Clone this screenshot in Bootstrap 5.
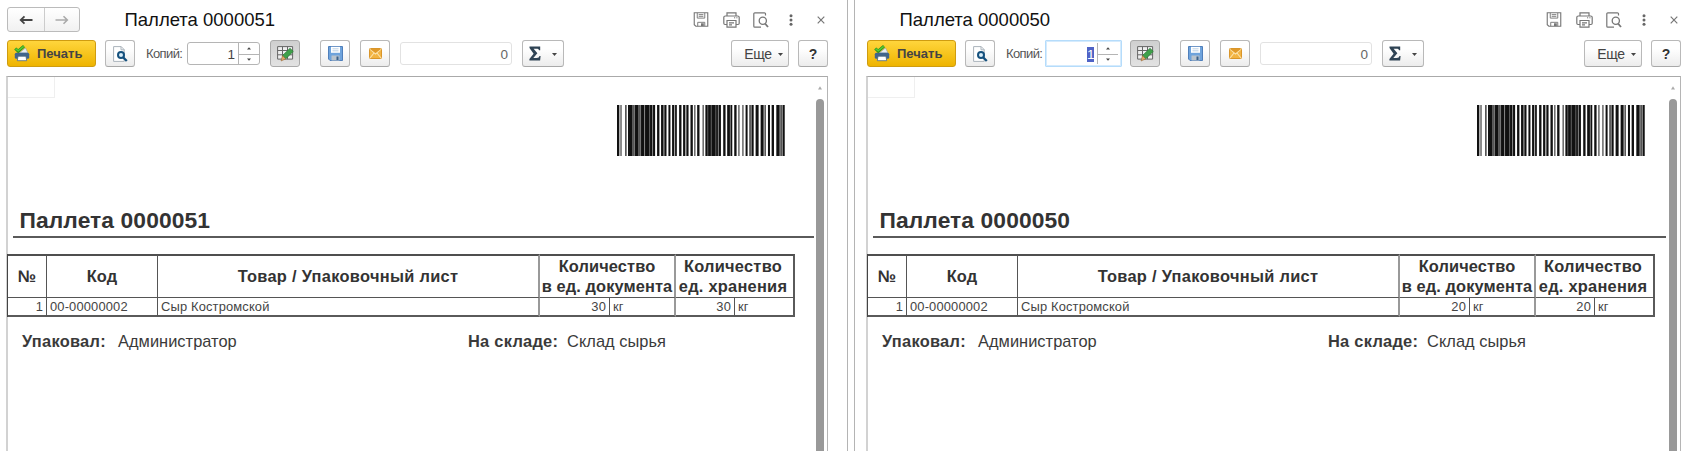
<!DOCTYPE html>
<html lang="ru">
<head>
<meta charset="utf-8">
<title>Паллеты</title>
<link href="https://cdn.jsdelivr.net/npm/bootstrap@5.3.0/dist/css/bootstrap.min.css" rel="stylesheet">
<style>
body{font-family:"Liberation Sans",Arial,sans-serif;background:#fff;color:#333;height:451px;overflow:hidden}
.pane-l{width:848px;padding:7px 19px 0 7px;border-right:1px solid #b4b4b4}
.pane-gap{width:6px}
.pane-r{width:837px;padding:7px 10px 0 12px;border-left:1px solid #b4b4b4}
.headrow{height:25px}
.navpair{width:73px;height:25px;border:1px solid #bbb;border-radius:3px;background:linear-gradient(#fff,#f1f1f1)}
.navpair>span+span{border-left:1px solid #ccc}
.wintitle{font-size:18.5px;line-height:24px;color:#111;margin-left:44.5px}
.pane-r .wintitle{margin-left:32.5px}
.headicons{padding-right:3px}
.headicons svg{display:block}
.m9{margin-left:9px}.m10{margin-left:10px}.m13{margin-left:13px}.m14{margin-left:14px}.m20{margin-left:20px}.m24{margin-left:24px}
.toolrow{height:27px;margin-top:8px}
.tb{height:27px;width:30px;padding:0;border:1px solid #b9b9b9;border-bottom-color:#a8a8a8;border-radius:3px;background:linear-gradient(#fff 30%,#ececec);font-size:14px;line-height:1;color:#444;display:flex;align-items:center;justify-content:center;flex:none}
.tb-print{width:89px;background:linear-gradient(#ffd53c,#eeb400);border-color:#cf9c10;color:#444;font-weight:700;font-size:13px;justify-content:flex-start;padding-left:6px}
.tb-print svg{margin-right:7px}
.tb-sum{width:42px}
.tb-more{width:58px;letter-spacing:-.4px}
.tb-more span{margin-left:7px}
.tb-help{font-size:14px;font-weight:700;color:#333}
.tb-on{background:linear-gradient(#cfcfcf,#e2e2e2);border-color:#aaa}
.lbl{font-size:13px;color:#555;width:41px;line-height:27px;margin-left:11px;letter-spacing:-.6px;white-space:nowrap}
.fld{height:23px;border:1px solid #b5b5b5;border-radius:3px;font-size:13.5px;line-height:23px;color:#444;flex:none}
.fld-copies{width:73px}
.fld-copies .cnt{padding-right:3px}
.fld-focus{width:77px;height:27px;margin:0 -2px;border:1px solid #b5dcfb;box-shadow:inset 0 0 0 1px #d5ebfd;border-radius:1px;padding:2px 3px 2px 1px}
.spin{width:21px;border-left:1px solid #b5b5b5}
.spin>i{height:50%;display:flex;align-items:center;justify-content:center}
.spin>i+i{border-top:1px solid #b5b5b5}
.fld-num{width:112px;border-color:#e2e2e2;padding-right:3px;color:#666}
.selx{background:#4f63c6;color:#fff;height:15px;line-height:15px;width:7px;margin:4px 3px 0 auto;text-align:center;display:block}
.sheet{margin-top:9px;height:375px;border-top:1px solid #aaa;border-left:2px solid #d2d2d2;border-right:1px solid #b5b5b5;margin-left:-1px;position:relative}
.selcell{width:47px;height:21px;border:1px solid #efefef;border-width:0 1px 1px 0}
.scrollcol{position:absolute;right:3px;top:0;width:8px;height:374px}
.scrollcol svg{display:block;margin:9px auto 0}
.thumb{height:352px;background:#999;border-radius:4px 4px 0 0;margin-top:9px}
.barcode{display:block;margin:7px 0 0 609px}
.doctitle{font-size:22.8px;font-weight:700;line-height:26px;margin:51px 0 0 11.5px;color:#333;letter-spacing:.1px}
.docrule{height:2px;background:#5a5a5a;margin:3px 13px 0 5px}
.pane-r .docrule{margin-right:14px}
.doc{display:grid;grid-template-columns:39px 111px 382px 70px 66px 59px 60px;grid-template-rows:44px 19px;width:788px;margin:16px 0 0 -1px;position:relative;border-left:1px solid #444}
.doc>div{border-right:1px solid #555;border-bottom:1px solid #555;display:flex;align-items:center;white-space:nowrap;font-size:12.9px;letter-spacing:.16px;color:#444;padding:1px 4px 0 3px}
.doc>.hd{font-weight:700;font-size:16.4px;line-height:20px;letter-spacing:.1px;border-top:2px solid #4f4f4f;justify-content:center;text-align:center;color:#333;padding:0 0 2px}
.doc>.wide{letter-spacing:.3px}
.doc>.last{border-bottom:2px solid #5a5a5a}
.doc>.g{border-right:2px solid #999}
.doc>.e{border-right:2px solid #5a5a5a}
.doc>.n{justify-content:flex-end;padding-right:3px}
.doc>.two{grid-column:span 2}
.store{margin-right:3px;letter-spacing:.25px}
.foot{font-size:16.4px;line-height:20px;margin-top:14px;color:#3a3a3a;letter-spacing:.04px;white-space:nowrap}
.foot b{letter-spacing:.27px}
.f1{margin-left:14px;width:96px}.f2{width:350px}.f3{width:99px}
.g8{margin-left:6px}.g11{margin-left:11px}
.g8,.g11{margin-top:1px}
</style>
</head>
<body>
<svg width="0" height="0" class="position-absolute"><defs>
<symbol id="disk" viewBox="0 0 16 16"><path d="M1 .8h14.200v14.400H2.500L.8 13.500V.8z" fill="none" stroke="#777" stroke-width="1.200"/><path d="M4 1v5.500h8V1M5.500 2.800h5M5.500 4.600h5M4.500 15v-4h7.500v4" fill="none" stroke="#777"/><path d="M8 12h3v3H8z" fill="#777"/></symbol>
<symbol id="prn" viewBox="0 0 17 16"><path d="M4 4V.8h9V4M3.500 12.500H2a1.200 1.200 0 0 1-1.200-1.200V5.500A1.500 1.500 0 0 1 2.300 4h12.400a1.500 1.500 0 0 1 1.500 1.500v5.800a1.200 1.200 0 0 1-1.200 1.200h-1.500M4 8.500h9v6.700H4zM6 10.800h5M6 12.800h3" fill="none" stroke="#777" stroke-width="1.200"/><path d="M11 5.800h1.200M13.300 5.800h1.200" stroke="#777"/></symbol>
<symbol id="prev" viewBox="0 0 16 16"><path d="M12.500 3.500V1.800a1 1 0 0 0-1-1H1.800a1 1 0 0 0-1 1v12.400a1 1 0 0 0 1 1H8" fill="none" stroke="#777" stroke-width="1.200"/><circle cx="9.800" cy="8.800" r="3.600" fill="none" stroke="#777" stroke-width="1.300"/><path d="M12 11.500l3 3.500" stroke="#777" stroke-width="1.800"/></symbol>
<symbol id="dots" viewBox="0 0 4 12"><circle cx="2" cy="1.700" r="1.500" fill="#666"/><circle cx="2" cy="6" r="1.500" fill="#666"/><circle cx="2" cy="10.300" r="1.500" fill="#666"/></symbol>
<symbol id="cross" viewBox="0 0 8 8"><path d="M.7.7l6.600 6.600M7.300.7L.7 7.300" stroke="#777" stroke-width="1.200"/></symbol>
<symbol id="printc" viewBox="0 0 16 17"><path d="M5 8l6.500-5L14 8z" fill="#e9eef2" stroke="#8c9aa5" stroke-width=".6"/><rect x=".8" y="7.800" width="14.400" height="6" rx="1.500" fill="#41658c"/><path d="M4 11.200h8l.7 4.500H3.300z" fill="#fff" stroke="#49657f" stroke-width=".8"/><path d="M1.200 3.500l3 2.700L10 1.200" fill="none" stroke="#2c8d1c" stroke-width="3"/><path d="M1.500 3.600l2.700 2.200L9.700 1.400" fill="none" stroke="#55cc33" stroke-width="1.500"/></symbol>
<symbol id="prevc" viewBox="0 0 15 16"><path d="M.6.6h7.600l3 3v11.800H.6z" fill="#fff" stroke="#aab3bb"/><path d="M8 .6v3.200h3.200" fill="none" stroke="#aab3bb"/><circle cx="8" cy="9" r="3" fill="#d9eefa" stroke="#15517e" stroke-width="2"/><path d="M10.300 11.500l3.500 3.500" stroke="#15517e" stroke-width="2.400"/></symbol>
<symbol id="tabc" viewBox="0 0 17 16"><path d="M.6.600h15v12.500H.6zM.6 4.500h15M.6 8.800h15M5.500.6v12.500M10.500.6v12.500" fill="#eee" stroke="#666"/><path d="M5.500 9.500L13 2.200l3.300 3.200-7.600 7.500z" fill="#3fa04a" stroke="#287534" stroke-width=".6"/><path d="M5.500 9.500l3.200 3.400L4 15z" fill="#e2a66a" stroke="#8a5c2c" stroke-width=".5"/></symbol>
<symbol id="diskc" viewBox="0 0 15 15"><path d="M.5.5h14v14H2l-1.500-1.500z" fill="#6ea3dc" stroke="#4f7fbb"/><rect x="3" y=".8" width="9" height="6" fill="#fff"/><path d="M4.500 2.800h6M4.500 4.800h6" stroke="#a9c4dd" stroke-width=".8"/><rect x="3.500" y="9.500" width="8" height="5" fill="#b9c3cc"/><rect x="8.500" y="10.500" width="2" height="3.500" fill="#39618c"/></symbol>
<symbol id="mail" viewBox="0 0 13 11"><rect x=".5" y=".5" width="12" height="10" rx=".8" fill="#f2b443" stroke="#d9952a"/><path d="M1 1l5.500 5L12 1M1 10l4-5M12 10L8 5" fill="none" stroke="#fbe3ae" stroke-width="1.100"/><path d="M1 1h11L6.500 5z" fill="#e09a2b"/></symbol>
<symbol id="sigma" viewBox="0 0 12 15"><path d="M.5.500h10.700v3.700H10C9.700 2.900 9 2.700 7.500 2.700H4.600L8.400 7.300 4.300 12h3.400c1.600 0 2.400-.5 2.700-1.900h1.200l-.5 4.400H.4v-1.400L4.600 7.800.5 2z" fill="#2f4354"/></symbol>
<symbol id="caret" viewBox="0 0 5 3"><path d="M0 0h5L2.500 3z" fill="#444"/></symbol>
<symbol id="up" viewBox="0 0 4 4"><path d="M0 3.500h4L2 .3z" fill="#aaa"/></symbol>
<symbol id="sup" viewBox="0 0 4 3"><path d="M0 2.500h4L2 .3z" fill="#444"/></symbol>
<symbol id="sdn" viewBox="0 0 4 3"><path d="M0 .5h4L2 2.700z" fill="#444"/></symbol>
<symbol id="arrL" viewBox="0 0 14 10"><path d="M13.500 5H2M5.500 1.300L1.700 5l3.800 3.700" fill="none" stroke="#444" stroke-width="1.800"/></symbol>
<symbol id="arrR" viewBox="0 0 14 10"><path d="M.5 5H12M8.500 1.300L12.300 5 8.500 8.700" fill="none" stroke="#aaa" stroke-width="1.600"/></symbol>
<symbol id="bars" viewBox="51 315 503 152"><path fill="#8a8a8a" d="M84 315h81v152h-81zM316 315h46v152h-46z"/><path fill="#bbb" d="M183 315h16v152h-16zM216 315h14v152h-14zM249 315h16v152h-16zM381 315h15v152h-15zM447 315h13v152h-13zM490 315h7v152h-7zM538 315h15v152h-15z"/><path fill="#111" d="M51 315h7v152h-7zM84 315h13v152h-13zM105 315h10v152h-10zM123 315h9v152h-9zM135 315h13v152h-13zM150 315h6v152h-6zM159 315h6v152h-6zM171 315h7v152h-7zM183 315h7v152h-7zM193 315h6v152h-6zM205 315h6v152h-6zM216 315h6v152h-6zM225 315h5v152h-5zM237 315h7v152h-7zM249 315h6v152h-6zM259 315h6v152h-6zM271 315h7v152h-7zM291 315h7v152h-7zM316 315h6v152h-6zM324 315h8v152h-8zM334 315h12v152h-12zM348 315h5v152h-5zM356 315h6v152h-6zM369 315h7v152h-7zM381 315h8v152h-8zM391 315h5v152h-5zM402 315h7v152h-7zM436 315h6v152h-6zM454 315h6v152h-6zM466 315h9v152h-9zM481 315h9v152h-9zM503 315h6v152h-6zM514 315h7v152h-7zM528 315h10v152h-10zM547 315h6v152h-6z"/><path fill="#555" d="M61 315h4v152h-4zM75 315h5v152h-5zM98 315h5v152h-5zM117 315h4v152h-4zM282 315h4v152h-4zM307 315h4v152h-4zM414 315h4v152h-4zM426 315h4v152h-4zM447 315h5v152h-5zM493 315h4v152h-4zM540 315h5v152h-5z"/></symbol>
</defs></svg>
<div class="d-flex h-100">
<section class="pane-l flex-shrink-0">
  <div class="headrow d-flex align-items-center">
    <div class="navpair d-flex"><span class="w-50 d-flex align-items-center justify-content-center"><svg width="14" height="10"><use href="#arrL"/></svg></span><span class="w-50 d-flex align-items-center justify-content-center"><svg width="14" height="10"><use href="#arrR"/></svg></span></div>
    <div class="wintitle">Паллета 0000051</div>
    <div class="headicons d-flex align-items-center ms-auto"><svg width="16" height="15"><use href="#disk"/></svg><svg width="17" height="16" class="m14"><use href="#prn"/></svg><svg width="16" height="16" class="m13"><use href="#prev"/></svg><svg width="4" height="12" class="m20"><use href="#dots"/></svg><svg width="8" height="8" class="m24"><use href="#cross"/></svg></div>
  </div>
  <div class="toolrow d-flex align-items-center">
    <button class="tb tb-print"><svg width="16" height="17"><use href="#printc"/></svg>Печать</button>
    <button class="tb m9"><svg width="15" height="16"><use href="#prevc"/></svg></button>
    <span class="lbl">Копий:</span>
    <div class="fld fld-copies d-flex"><span class="cnt flex-grow-1 text-end">1</span><span class="spin"><i><svg width="4" height="3"><use href="#sup"/></svg></i><i><svg width="4" height="3"><use href="#sdn"/></svg></i></span></div>
    <button class="tb tb-on m10"><svg width="17" height="16"><use href="#tabc"/></svg></button>
    <button class="tb m20"><svg width="15" height="15"><use href="#diskc"/></svg></button>
    <button class="tb m10"><svg width="13" height="11"><use href="#mail"/></svg></button>
    <div class="fld fld-num text-end m10">0</div>
    <button class="tb tb-sum m10"><svg width="12" height="15"><use href="#sigma"/></svg><svg width="5" height="3" class="g11"><use href="#caret"/></svg></button>
    <button class="tb tb-more ms-auto"><span>Еще</span><svg width="5" height="3" class="g8"><use href="#caret"/></svg></button>
    <button class="tb tb-help m9">?</button>
  </div>
  <div class="sheet">
    <div class="selcell"></div>
    <svg class="barcode" width="168" height="51"><use href="#bars"/></svg>
    <div class="doctitle">Паллета 0000051</div>
    <div class="docrule"></div>
    <div class="doc">
      <div class="hd">№</div><div class="hd">Код</div><div class="hd wide g">Товар / Упаковочный лист</div>
      <div class="hd two g">Количество<br>в ед. документа</div><div class="hd two e"><div class="store">Количество<br>ед. хранения</div></div>
      <div class="last n">1</div><div class="last">00-00000002</div><div class="last g">Сыр Костромской</div><div class="last n">30</div><div class="last g">кг</div><div class="last n">30</div><div class="last e">кг</div>
    </div>
    <div class="foot d-flex"><b class="f1">Упаковал:</b><span class="f2">Администратор</span><b class="f3">На складе:</b><span>Склад сырья</span></div>
    <div class="scrollcol"><svg width="4" height="4"><use href="#up"/></svg><div class="thumb"></div></div>
  </div>
</section>
<div class="pane-gap flex-shrink-0"></div>
<section class="pane-r flex-shrink-0">
  <div class="headrow d-flex align-items-center">
    <div class="wintitle">Паллета 0000050</div>
    <div class="headicons d-flex align-items-center ms-auto"><svg width="16" height="15"><use href="#disk"/></svg><svg width="17" height="16" class="m14"><use href="#prn"/></svg><svg width="16" height="16" class="m13"><use href="#prev"/></svg><svg width="4" height="12" class="m20"><use href="#dots"/></svg><svg width="8" height="8" class="m24"><use href="#cross"/></svg></div>
  </div>
  <div class="toolrow d-flex align-items-center">
    <button class="tb tb-print"><svg width="16" height="17"><use href="#printc"/></svg>Печать</button>
    <button class="tb m9"><svg width="15" height="16"><use href="#prevc"/></svg></button>
    <span class="lbl">Копий:</span>
    <div class="fld fld-focus d-flex"><span class="flex-grow-1"><span class="selx">1</span></span><span class="spin"><i><svg width="4" height="3"><use href="#sup"/></svg></i><i><svg width="4" height="3"><use href="#sdn"/></svg></i></span></div>
    <button class="tb tb-on m10"><svg width="17" height="16"><use href="#tabc"/></svg></button>
    <button class="tb m20"><svg width="15" height="15"><use href="#diskc"/></svg></button>
    <button class="tb m10"><svg width="13" height="11"><use href="#mail"/></svg></button>
    <div class="fld fld-num text-end m10">0</div>
    <button class="tb tb-sum m10"><svg width="12" height="15"><use href="#sigma"/></svg><svg width="5" height="3" class="g11"><use href="#caret"/></svg></button>
    <button class="tb tb-more ms-auto"><span>Еще</span><svg width="5" height="3" class="g8"><use href="#caret"/></svg></button>
    <button class="tb tb-help m9">?</button>
  </div>
  <div class="sheet">
    <div class="selcell"></div>
    <svg class="barcode" width="168" height="51"><use href="#bars"/></svg>
    <div class="doctitle">Паллета 0000050</div>
    <div class="docrule"></div>
    <div class="doc">
      <div class="hd">№</div><div class="hd">Код</div><div class="hd wide g">Товар / Упаковочный лист</div>
      <div class="hd two g">Количество<br>в ед. документа</div><div class="hd two e"><div class="store">Количество<br>ед. хранения</div></div>
      <div class="last n">1</div><div class="last">00-00000002</div><div class="last g">Сыр Костромской</div><div class="last n">20</div><div class="last g">кг</div><div class="last n">20</div><div class="last e">кг</div>
    </div>
    <div class="foot d-flex"><b class="f1">Упаковал:</b><span class="f2">Администратор</span><b class="f3">На складе:</b><span>Склад сырья</span></div>
    <div class="scrollcol"><svg width="4" height="4"><use href="#up"/></svg><div class="thumb"></div></div>
  </div>
</section>
</div>
<script src="https://cdn.jsdelivr.net/npm/bootstrap@5.3.0/dist/js/bootstrap.bundle.min.js"></script>
</body>
</html>
